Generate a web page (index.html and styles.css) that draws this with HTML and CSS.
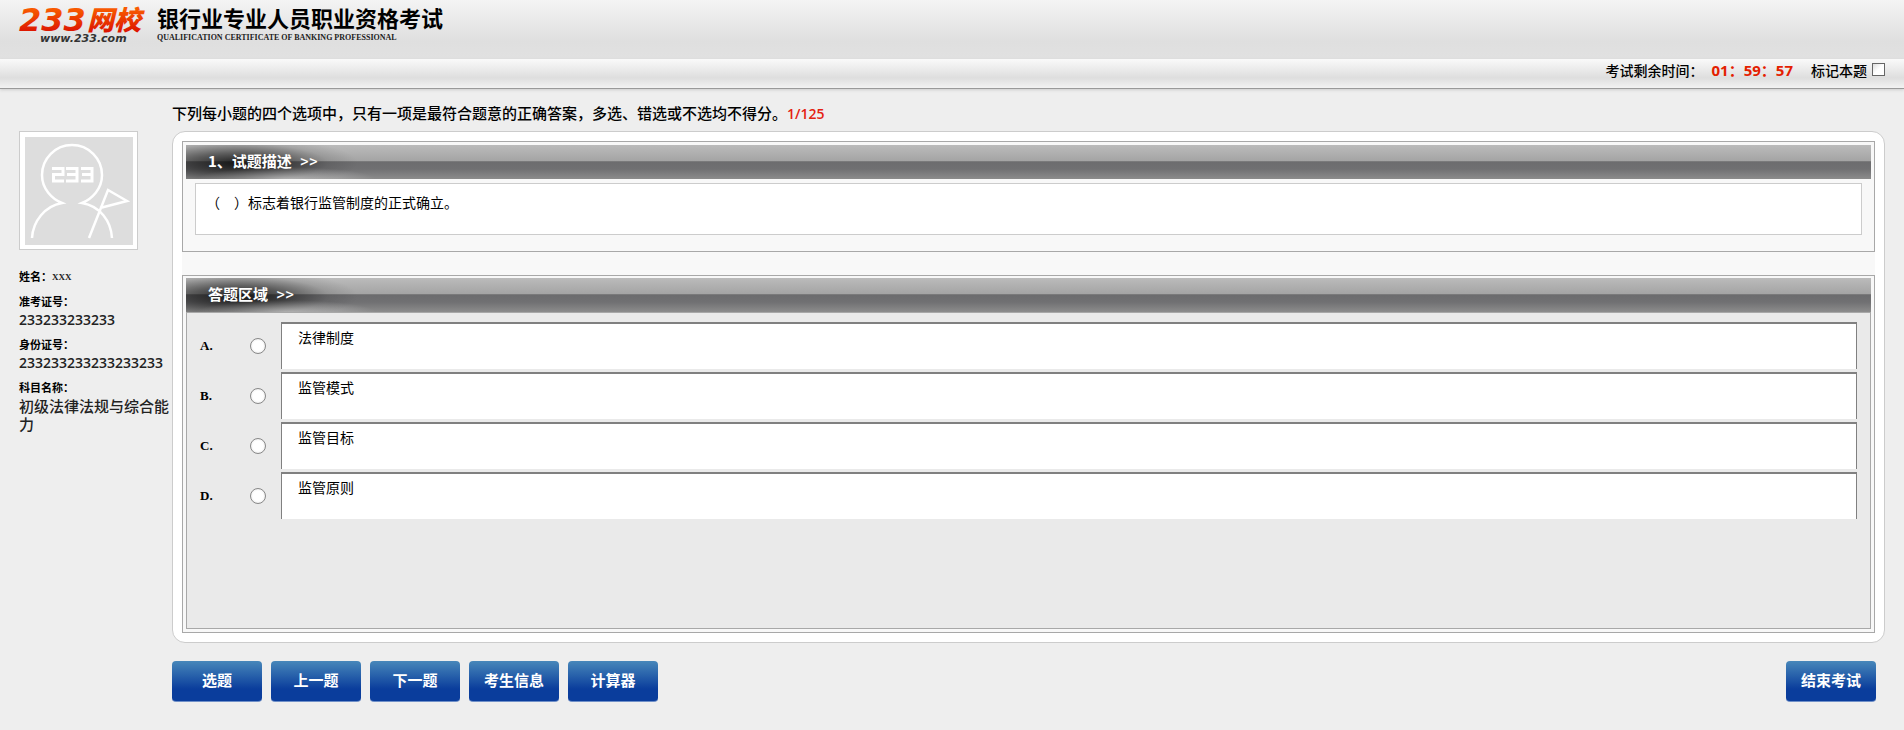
FILE: index.html
```html
<!DOCTYPE html>
<html lang="zh-CN">
<head>
    <meta charset="UTF-8">
    <meta name="viewport" content="width=device-width, initial-scale=1.0">
    <title>银行业专业人员职业资格考试</title>
    <link rel="stylesheet" href="styles.css">
</head>
<body>

    <!-- 顶部 -->
    <header class="header">
        <a class="logo" href="#">
            <svg width="126" height="42" viewBox="0 0 126 42">
                <defs>
                    <linearGradient id="red" gradientUnits="userSpaceOnUse" x1="0" y1="4" x2="0" y2="27">
                        <stop offset="0" stop-color="#f85a00"/>
                        <stop offset="1" stop-color="#dc1400"/>
                    </linearGradient>
                </defs>
                <text class="logo-num" x="0" y="26" fill="url(#red)">233</text>
                <text class="logo-cn" x="68" y="25" fill="url(#red)">网校</text>
                <text class="logo-url" x="21" y="37">www.233.com</text>
            </svg>
        </a>
        <div class="title">
            <h1>银行业专业人员职业资格考试</h1>
            <p>QUALIFICATION CERTIFICATE OF BANKING PROFESSIONAL</p>
        </div>
    </header>

    <!-- 时间栏 -->
    <div class="timebar">
        <span>考试剩余时间：</span>
        <span class="time">01：59：57</span>
        <label class="mark" for="mark">标记本题</label>
        <input type="checkbox" id="mark">
    </div>

    <div class="container">
        <!-- 考生信息 -->
        <aside class="sidebar">
            <div class="avatar">
                <svg width="108" height="108" viewBox="0 0 108 108" fill="none" stroke="#fff" stroke-width="2.500">
                    <path d="M7 101C8 84 20 69 37 66C27 62 17 52 17 38A30 30 0 0 1 77 38C77 52 67 62 57 66C75 69 86 84 87 101"/>
                    <path d="M64 101L83 53L102 64L75 71"/>
                    <path stroke-width="3" d="M27 31.500H38V37.500H28.500V44H39M41 31.500H52V44H41M42 37.500H52M56 31.500H67V44H56M57 37.500H67"/>
                </svg>
            </div>
            <dl>
                <div class="name"><dt>姓名：</dt><dd>XXX</dd></div>
                <div><dt>准考证号：</dt><dd class="num">233233233233</dd></div>
                <div><dt>身份证号：</dt><dd class="num">233233233233233233</dd></div>
                <div><dt>科目名称：</dt><dd>初级法律法规与综合能力</dd></div>
            </dl>
        </aside>

        <!-- 答题部分 -->
        <main class="main">
            <p class="tip">下列每小题的四个选项中，只有一项是最符合题意的正确答案，多选、错选或不选均不得分。<span>1/125</span></p>

            <div class="panel">
                <section class="box question">
                    <h2>1、试题描述<span class="arrow">&gt;&gt;</span></h2>
                    <div class="question-text">（　）标志着银行监管制度的正式确立。</div>
                </section>

                <section class="box answer">
                    <h2>答题区域<span class="arrow">&gt;&gt;</span></h2>
                    <div class="options">
                        <div class="option">
                            <span class="letter">A.</span>
                            <input type="radio" name="answer" id="a">
                            <label for="a">法律制度</label>
                        </div>
                        <div class="option">
                            <span class="letter">B.</span>
                            <input type="radio" name="answer" id="b">
                            <label for="b">监管模式</label>
                        </div>
                        <div class="option">
                            <span class="letter">C.</span>
                            <input type="radio" name="answer" id="c">
                            <label for="c">监管目标</label>
                        </div>
                        <div class="option">
                            <span class="letter">D.</span>
                            <input type="radio" name="answer" id="d">
                            <label for="d">监管原则</label>
                        </div>
                    </div>
                </section>
            </div>

            <!-- 功能按钮区 -->
            <div class="buttons">
                <button type="button">选题</button>
                <button type="button">上一题</button>
                <button type="button">下一题</button>
                <button type="button">考生信息</button>
                <button type="button">计算器</button>
                <button type="button" class="end">结束考试</button>
            </div>
        </main>
    </div>

</body>
</html>
```

FILE: styles.css
```css
* {
    box-sizing: border-box;
}

body, h1, h2, p, dl, dd {
    margin: 0;
}

body {
    font-family: "Noto Sans CJK SC", sans-serif;
    font-size: 15px;
    background-color: #eee;
    color: #000;
}

/* 顶部 */
.header {
    display: flex;
    height: 59px;
    padding: 5px 19px;
    gap: 12px;
    background: linear-gradient(#f4f4f4, #dfdfdf 70%, #e1e1e1);
}

.logo svg {
    display: block;
    overflow: visible;
}

.logo-num {
    font: italic bold 32px "DejaVu Sans", sans-serif;
}

.logo-cn {
    font: italic 900 27px "Noto Sans CJK SC", sans-serif;
}

.logo-url {
    font: italic bold 11px "DejaVu Sans", sans-serif;
    fill: #333;
}

.title h1 {
    font-size: 22px;
    line-height: 25px;
    font-weight: bold;
}

.title p {
    font: bold 8px/16px "Liberation Serif", serif;
    color: #222;
}

/* 时间栏 */
.timebar {
    display: flex;
    justify-content: flex-end;
    align-items: center;
    height: 30px;
    padding: 0 19px 8px;
    border-bottom: 1px solid #999;
    background: linear-gradient(#fafafa, #dedede 65%, #f2f2f2);
    box-shadow: 0 1px 3px #ccc;
    font-size: 14px;
    line-height: 20px;
    font-weight: 500;
}

.time {
    margin: 0 18px 0 8px;
    font: bold 15px/20px "Open Sans", "Noto Sans CJK SC", sans-serif;
    color: #e42000;
}

.timebar input {
    appearance: none;
    width: 13px;
    height: 13px;
    margin: 0 0 0 5px;
    border: 1px solid #666;
    background: linear-gradient(135deg, #ddd, #fff 50%);
}

.container {
    display: flex;
    padding: 0 19px;
}

/* 考生信息 */
.sidebar {
    flex: none;
    width: 153px;
    padding-top: 42px;
}

.avatar {
    width: 119px;
    height: 119px;
    padding: 5px;
    border: 1px solid #ccc;
    background-color: #fff;
}

.avatar svg {
    display: block;
    background-color: #ddd;
}

.sidebar dl {
    margin-top: 16px;
    color: #222;
}

.sidebar dt {
    font-size: 11px;
    line-height: 20px;
    font-weight: bold;
    color: #000;
}

.sidebar dd {
    line-height: 18px;
    font-weight: 500;
}

.sidebar .num {
    font: 600 14px/18px "Open Sans", sans-serif;
    margin-bottom: 5px;
}

.name {
    display: flex;
    margin-bottom: 3px;
}

.sidebar .name dd {
    font: bold 9px/22px "Liberation Serif", serif;
}

/* 答题部分 */
.main {
    flex: 1;
}

.tip {
    padding: 13px 0 7px;
    line-height: 22px;
    font-weight: 500;
}

.tip span {
    font: 600 14px/20px "Open Sans", sans-serif;
    color: #e42010;
}

.panel {
    padding: 9px;
    border: 1px solid #ccc;
    border-radius: 13px;
    background-color: #fff;
}

.box {
    padding: 3px;
    border: 1px solid #a8a8a8;
    background-color: #f8f8f8;
}

.box h2 {
    height: 34px;
    padding-left: 22px;
    font-size: 15px;
    line-height: 32px;
    font-weight: bold;
    color: #fff;
    background:
        radial-gradient(ellipse 90px 12px at 100px 34px, rgba(255, 255, 255, 0.4), transparent),
        radial-gradient(ellipse 120px 26px at 52px 18px, rgba(0, 0, 0, 0.8), rgba(0, 0, 0, 0.45) 40%, rgba(0, 0, 0, 0.1) 75%, transparent),
        linear-gradient(#bbb, #a4a4a4 16px, #888 16px, #6c6c6e 17px, #707072 24px, #8c8c8c);
}

.box .arrow {
    margin-left: 8px;
    font-family: Roboto, sans-serif;
    font-weight: 400;
    font-size: 17px;
}

.question {
    padding-bottom: 16px;
}

.question-text {
    min-height: 52px;
    margin: 4px 9px 0;
    padding: 8px 10px;
    border: 1px solid #ccc;
    background-color: #fff;
    font-size: 14px;
    line-height: 20px;
}

.answer {
    margin-top: 23px;
    padding-top: 2px;
    box-shadow: 0 -23px #f8f8f8;
}

.options {
    min-height: 317px;
    padding: 9px 13px;
    border: 1px solid #a8a8a8;
    background-color: #eaeaea;
}

.option {
    display: flex;
    align-items: center;
    margin-bottom: 3px;
}

.letter {
    width: 50px;
    font: bold 13px/18px "Liberation Serif", serif;
}

.option input {
    appearance: none;
    width: 16px;
    height: 16px;
    margin: 0 15px 0 0;
    border: 1px solid #888;
    border-radius: 50%;
    background: radial-gradient(#fff 50%, #ddd);
}

.option label {
    flex: 1;
    height: 47px;
    padding: 3px 16px;
    border: 1px solid #808080;
    border-top-width: 2px;
    border-bottom: none;
    background-color: #fff;
    font-size: 14px;
    line-height: 20px;
}

/* 功能按钮区 */
.buttons {
    display: flex;
    gap: 9px;
    padding: 18px 9px 28px 0;
}

.buttons button {
    width: 90px;
    height: 41px;
    padding: 0 0 3px;
    border: none;
    border-bottom: 1px solid #7090c8;
    border-radius: 4px;
    background: linear-gradient(#4787ba, #0a3d9c 70%);
    color: #fff;
    font: bold 15px "Noto Sans CJK SC", sans-serif;
    cursor: pointer;
}

.buttons .end {
    margin-left: auto;
}
```
